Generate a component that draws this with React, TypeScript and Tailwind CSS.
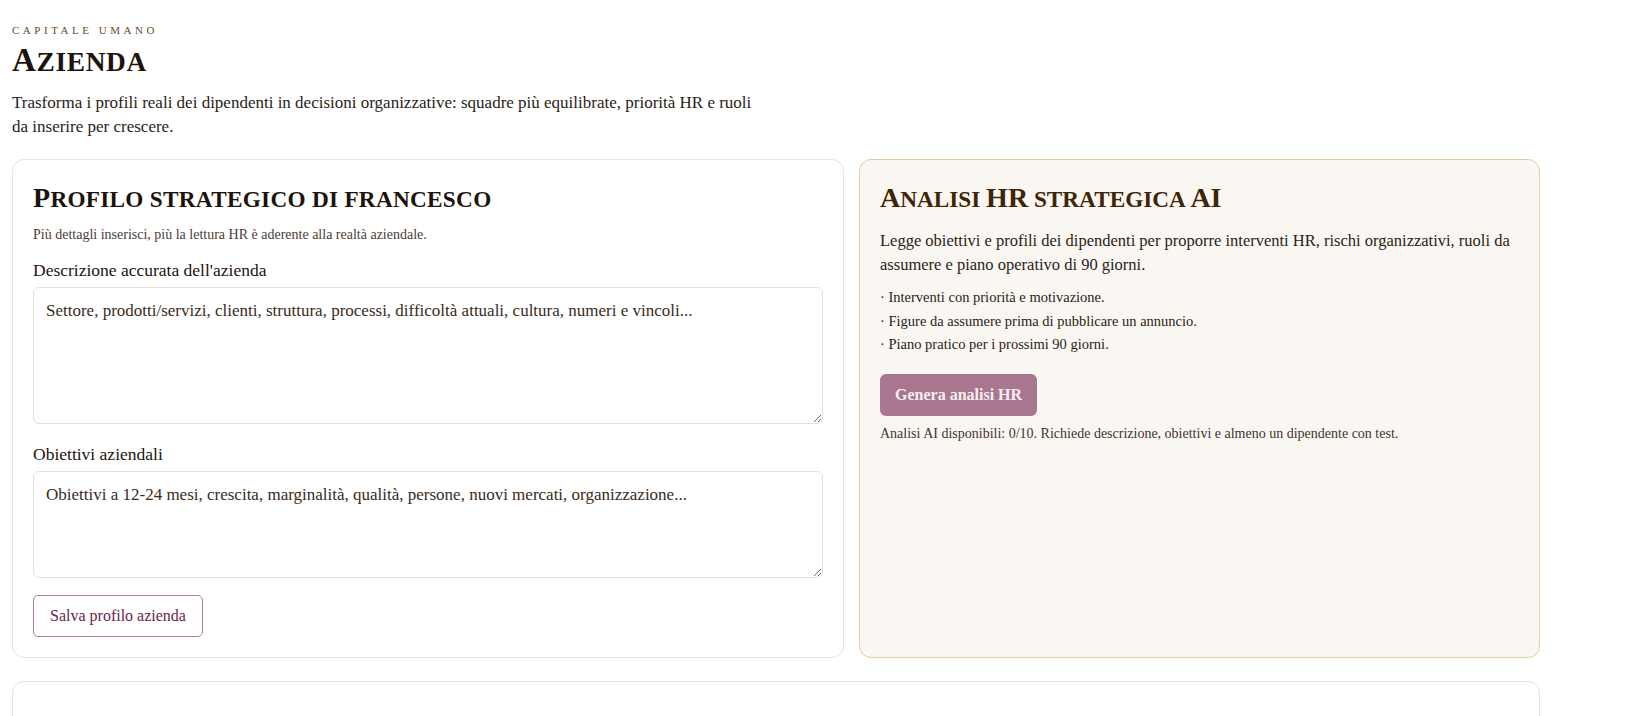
import React from 'react';

const serif = "font-['Liberation_Serif','DejaVu_Serif',serif]";

// Cinzel-like look: capitals full size, lowercase set as smaller capitals
const Caps: React.FC<{ text: string }> = ({ text }) => (
  <>
    {text.split(/([A-Z]+)/).map((part, i) =>
      /^[A-Z]+$/.test(part) ? (
        <span key={i}>{part}</span>
      ) : (
        <span key={i} className="uppercase text-[0.83em]">{part}</span>
      )
    )}
  </>
);

const bullets = [
  'Interventi con priorità e motivazione.',
  'Figure da assumere prima di pubblicare un annuncio.',
  'Piano pratico per i prossimi 90 giorni.',
];

const App: React.FC = () => (
  <div className={`${serif} min-h-screen bg-white text-[#2a1d16]`}>
    <div className="max-w-[1552px] px-3 pt-[22px] pb-10">
      <div className="text-[11px] tracking-[0.32em] uppercase text-[#6b4a22] leading-4">Capitale umano</div>
      <h1 className="text-[33px] leading-[40px] mt-[2px] font-semibold tracking-[0.02em] text-[#1d130e]">
        <Caps text="Azienda" />
      </h1>
      <p className="text-[17px] leading-[24px] max-w-[740px] mt-[9px] text-[#2a1d16]">
        Trasforma i profili reali dei dipendenti in decisioni organizzative: squadre più equilibrate, priorità HR e ruoli da inserire per crescere.
      </p>

      <div className="grid grid-cols-[832px_1fr] gap-[15px] mt-[20px]">
        <section className="border border-[#e6e3de] rounded-xl px-5 pt-[22px] pb-5 bg-white">
          <h2 className="text-[28px] leading-[32px] font-semibold tracking-[0.01em] text-[#1d130e]">
            <Caps text="Profilo strategico di francesco" />
          </h2>
          <p className="text-[14px] leading-5 text-[#4a3d36] mt-[10px]">Più dettagli inserisci, più la lettura HR è aderente alla realtà aziendale.</p>

          <label className="block text-[17.5px] leading-5 text-[#1d130e] mt-[15px]">Descrizione accurata dell'azienda</label>
          <textarea
            className="block w-full h-[137px] mt-[7px] border border-[#e3e0da] rounded-md px-3 py-[11px] text-[17px] leading-6 placeholder:text-[#3a2b22] outline-none resize-y"
            placeholder="Settore, prodotti/servizi, clienti, struttura, processi, difficoltà attuali, cultura, numeri e vincoli..."
          />

          <label className="block text-[17.5px] leading-5 text-[#1d130e] mt-[20px]">Obiettivi aziendali</label>
          <textarea
            className="block w-full h-[107px] mt-[7px] border border-[#e3e0da] rounded-md px-3 py-[11px] text-[17px] leading-6 placeholder:text-[#3a2b22] outline-none resize-y"
            placeholder="Obiettivi a 12-24 mesi, crescita, marginalità, qualità, persone, nuovi mercati, organizzazione..."
          />

          <button className="mt-[17px] h-[42px] px-[16px] border border-[#b08299] rounded-[5px] text-[16px] text-[#6a2448] bg-white">
            Salva profilo azienda
          </button>
        </section>

        <section className="border border-[#e2cda6] rounded-xl px-5 pt-[22px] pb-5 bg-[#faf7f2]">
          <h2 className="text-[28px] leading-[32px] font-semibold text-[#3f2508]">
            <Caps text="Analisi HR strategica AI" />
          </h2>
          <p className="text-[16.5px] leading-[24px] mt-[14px] text-[#2a1d16]">
            Legge obiettivi e profili dei dipendenti per proporre interventi HR, rischi organizzativi, ruoli da assumere e piano operativo di 90 giorni.
          </p>
          <ul className="mt-[9px] text-[14.5px] leading-[23.5px] text-[#2a1d16]">
            {bullets.map((b) => (
              <li key={b}>· {b}</li>
            ))}
          </ul>
          <button className="mt-[17px] h-[42px] px-[15px] rounded-md bg-[#a8768f] text-[16px] font-semibold text-[#f6eef1]">
            Genera analisi HR
          </button>
          <p className="text-[14px] leading-5 mt-[8px] text-[#3f342e]">
            Analisi AI disponibili: 0/10. Richiede descrizione, obiettivi e almeno un dipendente con test.
          </p>
        </section>
      </div>

      <section className="mt-[23px] border border-[#e6e3de] rounded-xl h-[300px] bg-white" />
    </div>
  </div>
);

export default App;
